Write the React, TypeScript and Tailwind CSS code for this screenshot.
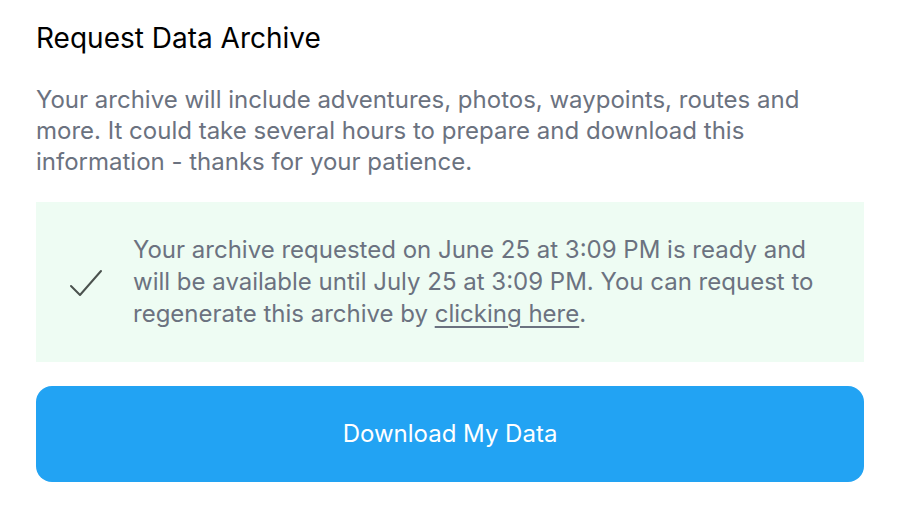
export default function App() {
  return (
    <main
      className="min-h-screen bg-white pl-9 pr-[38px] pt-[22px]"
      style={{ fontFamily: "Inter, 'Noto Sans', sans-serif" }}
    >
      <h1 className="text-[28px] leading-8 text-black">Request Data Archive</h1>
      <p className="mt-[30px] max-w-[800px] text-[24px] leading-[31px] text-[#6b7280]">
        Your archive will include adventures, photos, waypoints, routes and
        more. It could take several hours to prepare and download this
        information - thanks for your patience.
      </p>

      <div className="mt-[25px] flex h-[160px] items-center bg-[#eefcf3]">
        <div className="flex w-[97px] shrink-0 justify-center pl-[2px]">
          <svg width="34" height="30" viewBox="0 0 34 30" fill="none">
            <path
              d="M2 19 L11 28 L32 4"
              stroke="#4b524e"
              strokeWidth="2"
              strokeLinecap="round"
              strokeLinejoin="round"
            />
          </svg>
        </div>
        <p className="pr-[36px] text-[24px] leading-[32px] text-[#6b7280]">
          Your archive requested on June 25 at 3:09 PM is ready and will be
          available until July 25 at 3:09 PM. You can request to regenerate
          this archive by{" "}
          <a href="#" className="underline underline-offset-4">
            clicking here
          </a>
          .
        </p>
      </div>

      <button className="mt-6 flex h-[96px] w-full items-center justify-center rounded-2xl bg-[#22a3f3] text-[24px] text-white">
        Download My Data
      </button>
    </main>
  );
}
